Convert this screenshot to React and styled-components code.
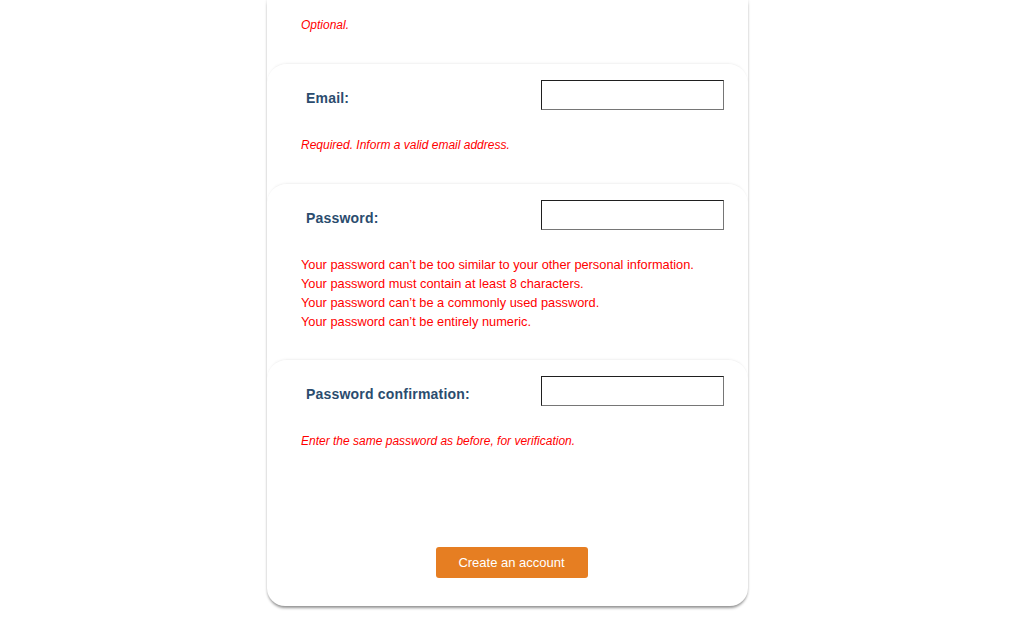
import React from 'react';
import styled, { createGlobalStyle } from 'styled-components';

const GlobalStyle = createGlobalStyle`
  html, body {
    margin: 0;
    padding: 0;
    background: #ffffff;
    font-family: 'Liberation Sans', Arial, sans-serif;
  }
`;

const Page = styled.main`
  width: 100%;
  height: 617px;
  overflow: hidden;
`;

const Card = styled.form`
  box-sizing: border-box;
  width: 481px;
  margin-left: calc(50% - 239px);
  background: #ffffff;
  border-radius: 0 0 18px 18px;
  box-shadow: 0 0 3px rgba(0, 0, 0, 0.14), 0 3px 3px -1px rgba(0, 0, 0, 0.4);
  padding-bottom: 28px;
`;

const Section = styled.div`
  padding: ${(p) => (p.$first ? '18px' : '16px')} 24px ${(p) => p.$bottom || '31px'} 34px;
  border-top: ${(p) => (p.$first ? 'none' : '1px solid #f4f4f4')};
  border-radius: ${(p) => (p.$first ? '0' : '20px 20px 0 0')};
  box-shadow: ${(p) => (p.$first ? 'none' : '0 -1px 2px rgba(0, 0, 0, 0.025)')};
`;

const Row = styled.div`
  display: flex;
  justify-content: space-between;
  align-items: flex-start;
  height: 30px;
`;

const Label = styled.label`
  margin: 10px 0 0 5px;
  font-size: 14px;
  line-height: 17px;
  font-weight: bold;
  letter-spacing: 0.2px;
  color: #2b4c6e;
`;

const Input = styled.input`
  box-sizing: border-box;
  width: 183px;
  height: 30px;
  margin: 0;
  border: 1px solid;
  border-color: #1f1f1f #767676 #767676 #1f1f1f;
  background: #ffffff;
  outline: none;
`;

const Help = styled.div`
  margin-top: ${(p) => p.$top || '28px'};
  font-size: ${(p) => (p.$list ? '12.8px' : '12px')};
  line-height: ${(p) => (p.$list ? '19px' : '14px')};
  font-style: ${(p) => (p.$list ? 'normal' : 'italic')};
  color: #ff0000;
`;

const Footer = styled.div`
  display: flex;
  justify-content: center;
  padding-left: 8px;
`;

const Button = styled.button`
  width: 152px;
  height: 31px;
  border: none;
  border-radius: 3px;
  background: #e67e22;
  color: #ffffff;
  font-family: 'Liberation Sans', Arial, sans-serif;
  font-size: 13px;
  cursor: pointer;
`;

const fields = [
  {
    id: 'email',
    label: 'Email:',
    bottom: '31px',
    help: ['Required. Inform a valid email address.'],
  },
  {
    id: 'password1',
    label: 'Password:',
    list: true,
    bottom: '28px',
    help: [
      'Your password can’t be too similar to your other personal information.',
      'Your password must contain at least 8 characters.',
      'Your password can’t be a commonly used password.',
      'Your password can’t be entirely numeric.',
    ],
  },
  {
    id: 'password2',
    label: 'Password confirmation:',
    bottom: '99px',
    help: ['Enter the same password as before, for verification.'],
  },
];

export default function App() {
  return (
    <Page>
      <GlobalStyle />
      <Card onSubmit={(e) => e.preventDefault()}>
        <Section $first>
          <Help $top="0">Optional.</Help>
        </Section>
        {fields.map((f) => (
          <Section key={f.id} $bottom={f.bottom}>
            <Row>
              <Label htmlFor={f.id}>{f.label}</Label>
              <Input id={f.id} type={f.id === 'email' ? 'email' : 'password'} />
            </Row>
            <Help $list={f.list} $top={f.list ? '25px' : '28px'}>
              {f.help.map((line) => (
                <div key={line}>{line}</div>
              ))}
            </Help>
          </Section>
        ))}
        <Footer>
          <Button type="submit">Create an account</Button>
        </Footer>
      </Card>
    </Page>
  );
}
